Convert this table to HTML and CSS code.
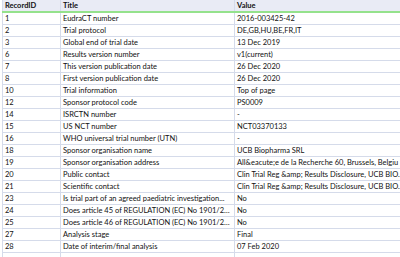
FILE: index.html
```html
<!DOCTYPE html>
<html lang="en">
<head>
  <meta charset="UTF-8">
  <title>Records</title>
  <link rel="stylesheet" href="styles.css">
</head>
<body>
  <table class="grid">
    <colgroup>
      <col class="c-id">
      <col class="c-title">
      <col class="c-value">
    </colgroup>
    <thead>
      <tr>
        <th>RecordID</th>
        <th>Title</th>
        <th>Value</th>
      </tr>
    </thead>
    <tbody>
      <tr><td>1</td><td>EudraCT number</td><td>2016-003425-42</td></tr>
      <tr><td>2</td><td>Trial protocol</td><td>DE,GB,HU,BE,FR,IT</td></tr>
      <tr><td>3</td><td>Global end of trial date</td><td>13 Dec 2019</td></tr>
      <tr><td>6</td><td>Results version number</td><td>v1(current)</td></tr>
      <tr><td>7</td><td>This version publication date</td><td>26 Dec 2020</td></tr>
      <tr><td>8</td><td>First version publication date</td><td>26 Dec 2020</td></tr>
      <tr><td>10</td><td>Trial information</td><td>Top of page</td></tr>
      <tr><td>12</td><td>Sponsor protocol code</td><td>PS0009</td></tr>
      <tr><td>14</td><td>ISRCTN number</td><td>-</td></tr>
      <tr><td>15</td><td>US NCT number</td><td>NCT03370133</td></tr>
      <tr><td>16</td><td>WHO universal trial number (UTN)</td><td>-</td></tr>
      <tr><td>18</td><td>Sponsor organisation name</td><td>UCB Biopharma SRL</td></tr>
      <tr><td>19</td><td>Sponsor organisation address</td><td class="clip">All&amp;eacute;e de la Recherche 60, Brussels, Belgiu</td></tr>
      <tr><td>20</td><td>Public contact</td><td class="clip">Clin Trial Reg &amp;amp; Results Disclosure, UCB BIO.</td></tr>
      <tr><td>21</td><td>Scientific contact</td><td class="clip">Clin Trial Reg &amp;amp; Results Disclosure, UCB BIO.</td></tr>
      <tr><td>23</td><td>Is trial part of an agreed paediatric investigation...</td><td>No</td></tr>
      <tr><td>24</td><td>Does article 45 of REGULATION (EC) No 1901/20...</td><td>No</td></tr>
      <tr><td>25</td><td>Does article 46 of REGULATION (EC) No 1901/20...</td><td>No</td></tr>
      <tr><td>27</td><td>Analysis stage</td><td>Final</td></tr>
      <tr><td>28</td><td>Date of interim/final analysis</td><td>07 Feb 2020</td></tr>
      <tr><td></td><td></td><td></td></tr>
    </tbody>
  </table>
</body>
</html>
```

FILE: styles.css
```css
:root {
  --head-bg: #e9ebf5;
  --line: #d5dbea;
  --accent: #95e28c;
  --text: #111;
}
body {
  margin: 0;
  background: #fff;
  font-family: 'Lato', 'Open Sans', sans-serif;
  font-size: 7.5px;
  color: var(--text);
  overflow: hidden;
}
.grid {
  border-collapse: collapse;
  table-layout: fixed;
  width: 398px;
  margin-left: 2px;
}
.c-id { width: 58px; }
.c-title { width: 174px; }
.c-value { width: 166px; }
.grid th,
.grid td {
  height: 11px;
  padding: 0 1px 0 2px;
  line-height: 11px;
  white-space: nowrap;
  overflow: hidden;
  text-overflow: ellipsis;
  text-align: left;
  border-left: 1px solid var(--line);
  border-bottom: 1px solid var(--line);
}
.grid td.clip {
  text-overflow: clip;
  padding-right: 0;
}
.grid th {
  background: var(--head-bg);
  font-weight: 700;
  border-bottom: 2px solid var(--accent);
}
```
